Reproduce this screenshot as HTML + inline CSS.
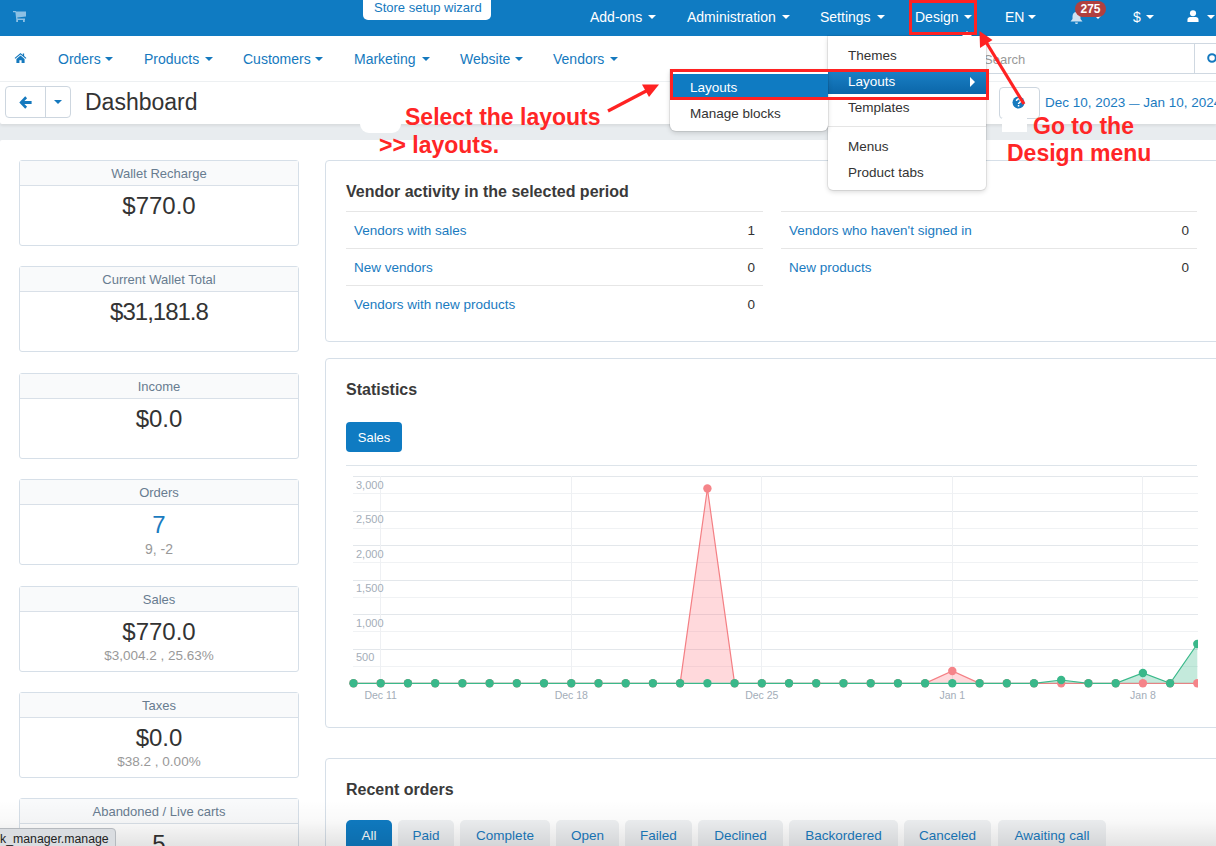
<!DOCTYPE html>
<html><head><meta charset="utf-8">
<style>
*{box-sizing:border-box;margin:0;padding:0}
html,body{width:1216px;height:846px;overflow:hidden}
body{position:relative;font-family:"Liberation Sans",sans-serif;background:#e8ecef;color:#333}
.abs{position:absolute}
.t{position:absolute;white-space:nowrap;line-height:1}
.caret{position:absolute;width:0;height:0;border-left:4px solid transparent;border-right:4px solid transparent;border-top:4px solid currentColor}
/* top bar */
#top{position:absolute;left:0;top:0;width:1216px;height:36px;background:#0f7bc2}
#top .t{color:#fff;font-size:14px;top:10px}
#top .caret{color:#fff;top:15px}
#wiz{position:absolute;left:363px;top:-4px;width:128px;height:24px;background:#fff;border-radius:5px;color:#1579be;font-size:13px;line-height:1}
/* nav 2 */
#nav{position:absolute;left:0;top:36px;width:1216px;height:46px;background:#fff;border-bottom:1px solid #edf0f2}
#nav .t{color:#1579be;font-size:14px;top:16px}
#nav .caret{color:#1579be;top:21px}
/* toolbar */
#tb{position:absolute;left:0;top:82px;width:1216px;height:42px;background:#fff;border-radius:0 0 0 2px;box-shadow:0 2px 3px rgba(0,0,0,.07)}
#main{position:absolute;left:0;top:140px;width:1216px;height:706px;background:#fff;border-radius:2px 0 0 0}
.card{position:absolute;left:19px;width:280px;height:86px;border:1px solid #d6dfe8;border-radius:3px;background:#fff}
.card .hd{height:25px;background:#f9fafb;border-bottom:1px solid #d9e0e8;color:#687c90;font-size:13px;text-align:center;line-height:25px}
.card .v{position:absolute;left:0;width:100%;text-align:center;font-size:24px;color:#333;line-height:1}
.card .s{position:absolute;left:0;width:100%;text-align:center;font-size:13.5px;color:#999;line-height:1}
.pan{position:absolute;left:325px;width:900px;border:1px solid #d6dfe8;border-radius:4px;background:#fff}
.h3{position:absolute;font-weight:bold;font-size:16px;color:#3a3a3a;white-space:nowrap;line-height:1}
.row{position:absolute;height:37px;border-top:1px solid #e6e6e6}
.row .l{position:absolute;left:8px;top:12px;color:#1a7bbf;font-size:13.5px;white-space:nowrap;line-height:1}
.row .n{position:absolute;right:8px;top:12px;color:#333;font-size:13.5px;line-height:1}
.tab{position:absolute;top:820px;height:32px;border-radius:5px;background:#eef0f2;color:#1a7bbf;font-size:13.5px;text-align:center;line-height:32px}
.dd{position:absolute;background:#fff;border-radius:0 0 5px 5px;box-shadow:0 0 0 1px rgba(0,0,0,.07),0 2px 5px rgba(0,0,0,.15)}
.dd .t{color:#333;font-size:13.5px}
.red{color:#ff2626;font-weight:bold;font-size:23px;position:absolute;white-space:nowrap;line-height:1}
</style></head><body>

<div id="top">
  <svg class="abs" style="left:13px;top:11px" width="14" height="12" viewBox="0 0 14 12"><path d="M0 0H2.8L3.2 0.6H13V5.6L4.3 6.6L4.5 7.5H12V9H3.3L2.4 1.2H0z" fill="#8cc0e4"/><rect x="3.2" y="9" width="1.8" height="2" fill="#8cc0e4"/><rect x="10" y="9" width="1.8" height="2" fill="#8cc0e4"/></svg>
  <div id="wiz"><span style="position:absolute;white-space:nowrap;left:11px;top:5px;color:#1579be">Store setup wizard</span></div>
  <span class="t" style="left:590px">Add-ons</span><span class="caret" style="left:648px"></span>
  <span class="t" style="left:687px">Administration</span><span class="caret" style="left:782px"></span>
  <span class="t" style="left:820px">Settings</span><span class="caret" style="left:877px"></span>
  <span class="t" style="left:915px">Design</span><span class="caret" style="left:964px"></span>
  <span class="t" style="left:1005px">EN</span><span class="caret" style="left:1028px"></span>
  <svg class="abs" style="left:1070px;top:12px" width="13" height="12" viewBox="0 0 13 12"><path d="M6.5 0C4 0 2.5 2 2.5 4.5V7L0.5 9.5h12L10.5 7V4.5C10.5 2 9 0 6.5 0z M5 10.5h3a1.5 1.5 0 0 1-3 0z" fill="#cfe3f2"/></svg>
  <span class="caret" style="left:1094px"></span>
  <div class="abs" style="left:1075px;top:1px;width:31px;height:16px;border-radius:8px;background:#b0403f;color:#fff;font-size:12px;font-weight:bold;text-align:center;line-height:16px">275</div>
  <span class="t" style="left:1133px">$</span><span class="caret" style="left:1146px"></span>
  <svg class="abs" style="left:1187px;top:10px" width="12" height="12" viewBox="0 0 13 13"><circle cx="6.5" cy="3.5" r="3.3" fill="#fff"/><path d="M0.5 13V10.5C0.5 8.5 2 7.5 3.5 7.5h6c1.5 0 3 1 3 3V13z" fill="#fff"/></svg>
  <span class="caret" style="left:1207px"></span>
</div>

<div id="nav">
  <svg class="abs" style="left:14px;top:17px" width="13" height="10" viewBox="0 0 13 11"><path d="M6.5 0L0 5.5l0.8 0.9L6.5 1.6l5.7 4.8 0.8-0.9L10.5 3.4V0.6H9V2.1z M2 6.5V11h3.3V8h2.4v3H11V6.5L6.5 2.8z" fill="#1579be"/></svg>
  <span class="t" style="left:58px">Orders</span><span class="caret" style="left:105px"></span>
  <span class="t" style="left:144px">Products</span><span class="caret" style="left:205px"></span>
  <span class="t" style="left:243px">Customers</span><span class="caret" style="left:315px"></span>
  <span class="t" style="left:354px">Marketing</span><span class="caret" style="left:422px"></span>
  <span class="t" style="left:460px">Website</span><span class="caret" style="left:515px"></span>
  <span class="t" style="left:553px">Vendors</span><span class="caret" style="left:610px"></span>
  <div class="abs" style="left:960px;top:7px;width:300px;height:31px;border:1px solid #cfd8e1;border-radius:3px;background:#fff"></div>
  <div class="abs" style="left:1194px;top:8px;width:1px;height:29px;background:#cfd8e1"></div>
  <span class="t" style="left:984px;top:17px;color:#999;font-size:13px">Search</span>
  <svg class="abs" style="left:1207px;top:17px" width="12" height="12" viewBox="0 0 12 12"><circle cx="5" cy="5" r="3.8" fill="none" stroke="#1579be" stroke-width="2"/></svg>
</div>

<div id="tb">
  <div class="abs" style="left:5px;top:4px;width:66px;height:32px;border:1px solid #cdd6df;border-radius:4px"></div>
  <div class="abs" style="left:45px;top:5px;width:1px;height:30px;background:#cdd6df"></div>
  <svg class="abs" style="left:19px;top:14px" width="13" height="13" viewBox="0 0 13 13"><path d="M6.2 0.3L0.3 6.5L6.2 12.7l1.9-1.9L5.4 8H12.6V5H5.4L8.1 2.2z" fill="#1579be"/></svg>
  <span class="caret" style="left:54px;top:18px;color:#1579be"></span>
  <span class="t" style="left:85px;top:9px;font-size:23px;color:#333">Dashboard</span>
  <div class="abs" style="left:999px;top:5px;width:41px;height:32px;border:1px solid #cdd6df;border-radius:4px"></div>
  <svg class="abs" style="left:1012px;top:14px" width="13" height="13" viewBox="0 0 13 13"><circle cx="6.5" cy="6.5" r="6" fill="#1579be"/><path d="M4.5 5a2 2 0 1 1 3 1.6c-0.7 0.4-1 0.7-1 1.4" stroke="#fff" stroke-width="1.5" fill="none"/><rect x="5.8" y="9" width="1.5" height="1.5" fill="#fff"/></svg>
  <span class="t" style="left:1045px;top:14px;font-size:13.5px;color:#1a7bbf">Dec 10, 2023 <span style="font-size:10.5px">—</span> Jan 10, 2024</span>
</div>

<div id="main"></div>

<!-- left cards -->
<div class="card" style="top:160px"><div class="hd">Wallet Recharge</div><div class="v" style="top:33px">$770.0</div></div>
<div class="card" style="top:266px"><div class="hd">Current Wallet Total</div><div class="v" style="top:33px;letter-spacing:-1px">$31,181.8</div></div>
<div class="card" style="top:373px"><div class="hd">Income</div><div class="v" style="top:33px">$0.0</div></div>
<div class="card" style="top:479px"><div class="hd">Orders</div><div class="v" style="top:33px;color:#1a7bbf">7</div><div class="s" style="top:62px;font-size:14px">9, -2</div></div>
<div class="card" style="top:586px"><div class="hd">Sales</div><div class="v" style="top:33px">$770.0</div><div class="s" style="top:62px">$3,004.2 , 25.63%</div></div>
<div class="card" style="top:692px"><div class="hd">Taxes</div><div class="v" style="top:33px">$0.0</div><div class="s" style="top:62px">$38.2 , 0.00%</div></div>
<div class="card" style="top:798px"><div class="hd">Abandoned / Live carts</div><div class="v" style="top:33px">5</div></div>

<!-- vendor activity -->
<div class="pan" style="top:160px;height:182px"></div>
<div class="h3" style="left:346px;top:184px">Vendor activity in the selected period</div>
<div class="row" style="left:346px;top:211px;width:417px"><span class="l">Vendors with sales</span><span class="n">1</span></div>
<div class="row" style="left:346px;top:248px;width:417px"><span class="l">New vendors</span><span class="n">0</span></div>
<div class="row" style="left:346px;top:285px;width:417px"><span class="l">Vendors with new products</span><span class="n">0</span></div>
<div class="row" style="left:781px;top:211px;width:416px"><span class="l">Vendors who haven't signed in</span><span class="n">0</span></div>
<div class="row" style="left:781px;top:248px;width:416px"><span class="l">New products</span><span class="n">0</span></div>

<!-- statistics -->
<div class="pan" style="top:358px;height:370px"></div>
<div class="h3" style="left:346px;top:382px">Statistics</div>
<div class="abs" style="left:346px;top:422px;width:56px;height:30px;border-radius:4px;background:#0f7bc2;color:#fff;font-size:13px;text-align:center;line-height:32px">Sales</div>
<div class="abs" style="left:346px;top:465px;width:851px;height:1px;background:#dde4ea"></div>
<svg id="chart" class="abs" style="left:340px;top:470px" width="858" height="240"><line x1="13.0" y1="6.5" x2="858.0" y2="6.5" stroke="#e3e7eb" stroke-width="1"/><line x1="13.0" y1="41.5" x2="858.0" y2="41.5" stroke="#e3e7eb" stroke-width="1"/><line x1="13.0" y1="75.5" x2="858.0" y2="75.5" stroke="#e3e7eb" stroke-width="1"/><line x1="13.0" y1="110.5" x2="858.0" y2="110.5" stroke="#e3e7eb" stroke-width="1"/><line x1="13.0" y1="144.5" x2="858.0" y2="144.5" stroke="#e3e7eb" stroke-width="1"/><line x1="13.0" y1="179.5" x2="858.0" y2="179.5" stroke="#e3e7eb" stroke-width="1"/><line x1="13.0" y1="23.5" x2="858.0" y2="23.5" stroke="#f0f2f4" stroke-width="1"/><line x1="13.0" y1="58.5" x2="858.0" y2="58.5" stroke="#f0f2f4" stroke-width="1"/><line x1="13.0" y1="92.5" x2="858.0" y2="92.5" stroke="#f0f2f4" stroke-width="1"/><line x1="13.0" y1="127.5" x2="858.0" y2="127.5" stroke="#f0f2f4" stroke-width="1"/><line x1="13.0" y1="161.5" x2="858.0" y2="161.5" stroke="#f0f2f4" stroke-width="1"/><line x1="13.0" y1="196.5" x2="858.0" y2="196.5" stroke="#f0f2f4" stroke-width="1"/><line x1="40.5" y1="6.0" x2="40.5" y2="213.0" stroke="#eef0f3" stroke-width="1"/><line x1="231.5" y1="6.0" x2="231.5" y2="213.0" stroke="#eef0f3" stroke-width="1"/><line x1="421.5" y1="6.0" x2="421.5" y2="213.0" stroke="#eef0f3" stroke-width="1"/><line x1="612.5" y1="6.0" x2="612.5" y2="213.0" stroke="#eef0f3" stroke-width="1"/><line x1="802.5" y1="6.0" x2="802.5" y2="213.0" stroke="#eef0f3" stroke-width="1"/><text x="16" y="19" font-size="11" fill="#a3adb8" font-family="Liberation Sans">3,000</text><text x="16" y="53" font-size="11" fill="#a3adb8" font-family="Liberation Sans">2,500</text><text x="16" y="88" font-size="11" fill="#a3adb8" font-family="Liberation Sans">2,000</text><text x="16" y="122" font-size="11" fill="#a3adb8" font-family="Liberation Sans">1,500</text><text x="16" y="157" font-size="11" fill="#a3adb8" font-family="Liberation Sans">1,000</text><text x="16" y="191" font-size="11" fill="#a3adb8" font-family="Liberation Sans">500</text><text x="40.7" y="229" font-size="10.5" fill="#a3adb8" text-anchor="middle" font-family="Liberation Sans">Dec 11</text><text x="231.3" y="229" font-size="10.5" fill="#a3adb8" text-anchor="middle" font-family="Liberation Sans">Dec 18</text><text x="421.8" y="229" font-size="10.5" fill="#a3adb8" text-anchor="middle" font-family="Liberation Sans">Dec 25</text><text x="612.3" y="229" font-size="10.5" fill="#a3adb8" text-anchor="middle" font-family="Liberation Sans">Jan 1</text><text x="802.9" y="229" font-size="10.5" fill="#a3adb8" text-anchor="middle" font-family="Liberation Sans">Jan 8</text><path d="M13.5 213.3 L13.5 213.3 L40.7 213.3 L67.9 213.3 L95.2 213.3 L122.4 213.3 L149.6 213.3 L176.8 213.3 L204.0 213.3 L231.3 213.3 L258.5 213.3 L285.7 213.3 L312.9 213.3 L340.1 213.3 L367.4 18.5 L394.6 213.3 L421.8 213.3 L449.0 213.3 L476.2 213.3 L503.5 213.3 L530.7 213.3 L557.9 213.3 L585.1 213.3 L612.3 201.0 L639.6 213.3 L666.8 213.3 L694.0 213.3 L721.2 213.3 L748.4 213.3 L775.7 213.3 L802.9 213.3 L830.1 213.3 L857.3 213.3 L857.3 213.3z" fill="rgba(255,120,130,0.28)"/><path d="M13.5 213.3 L40.7 213.3 L67.9 213.3 L95.2 213.3 L122.4 213.3 L149.6 213.3 L176.8 213.3 L204.0 213.3 L231.3 213.3 L258.5 213.3 L285.7 213.3 L312.9 213.3 L340.1 213.3 L367.4 18.5 L394.6 213.3 L421.8 213.3 L449.0 213.3 L476.2 213.3 L503.5 213.3 L530.7 213.3 L557.9 213.3 L585.1 213.3 L612.3 201.0 L639.6 213.3 L666.8 213.3 L694.0 213.3 L721.2 213.3 L748.4 213.3 L775.7 213.3 L802.9 213.3 L830.1 213.3 L857.3 213.3" fill="none" stroke="#f47f84" stroke-width="1.2"/><path d="M13.5 213.3 L13.5 213.3 L40.7 213.3 L67.9 213.3 L95.2 213.3 L122.4 213.3 L149.6 213.3 L176.8 213.3 L204.0 213.3 L231.3 213.3 L258.5 213.3 L285.7 213.3 L312.9 213.3 L340.1 213.3 L367.4 213.3 L394.6 213.3 L421.8 213.3 L449.0 213.3 L476.2 213.3 L503.5 213.3 L530.7 213.3 L557.9 213.3 L585.1 213.3 L612.3 213.3 L639.6 213.3 L666.8 213.3 L694.0 213.3 L721.2 210.0 L748.4 213.3 L775.7 213.3 L802.9 203.0 L830.1 213.3 L857.3 174.0 L857.3 213.3z" fill="rgba(58,185,138,0.3)"/><path d="M13.5 213.3 L40.7 213.3 L67.9 213.3 L95.2 213.3 L122.4 213.3 L149.6 213.3 L176.8 213.3 L204.0 213.3 L231.3 213.3 L258.5 213.3 L285.7 213.3 L312.9 213.3 L340.1 213.3 L367.4 213.3 L394.6 213.3 L421.8 213.3 L449.0 213.3 L476.2 213.3 L503.5 213.3 L530.7 213.3 L557.9 213.3 L585.1 213.3 L612.3 213.3 L639.6 213.3 L666.8 213.3 L694.0 213.3 L721.2 210.0 L748.4 213.3 L775.7 213.3 L802.9 203.0 L830.1 213.3 L857.3 174.0" fill="none" stroke="#3ab98a" stroke-width="1.2"/><circle cx="13.5" cy="213.3" r="4.2" fill="#f58489"/><circle cx="40.7" cy="213.3" r="4.2" fill="#f58489"/><circle cx="67.9" cy="213.3" r="4.2" fill="#f58489"/><circle cx="95.2" cy="213.3" r="4.2" fill="#f58489"/><circle cx="122.4" cy="213.3" r="4.2" fill="#f58489"/><circle cx="149.6" cy="213.3" r="4.2" fill="#f58489"/><circle cx="176.8" cy="213.3" r="4.2" fill="#f58489"/><circle cx="204.0" cy="213.3" r="4.2" fill="#f58489"/><circle cx="231.3" cy="213.3" r="4.2" fill="#f58489"/><circle cx="258.5" cy="213.3" r="4.2" fill="#f58489"/><circle cx="285.7" cy="213.3" r="4.2" fill="#f58489"/><circle cx="312.9" cy="213.3" r="4.2" fill="#f58489"/><circle cx="340.1" cy="213.3" r="4.2" fill="#f58489"/><circle cx="367.4" cy="18.5" r="4.2" fill="#f58489"/><circle cx="394.6" cy="213.3" r="4.2" fill="#f58489"/><circle cx="421.8" cy="213.3" r="4.2" fill="#f58489"/><circle cx="449.0" cy="213.3" r="4.2" fill="#f58489"/><circle cx="476.2" cy="213.3" r="4.2" fill="#f58489"/><circle cx="503.5" cy="213.3" r="4.2" fill="#f58489"/><circle cx="530.7" cy="213.3" r="4.2" fill="#f58489"/><circle cx="557.9" cy="213.3" r="4.2" fill="#f58489"/><circle cx="585.1" cy="213.3" r="4.2" fill="#f58489"/><circle cx="612.3" cy="201.0" r="4.2" fill="#f58489"/><circle cx="639.6" cy="213.3" r="4.2" fill="#f58489"/><circle cx="666.8" cy="213.3" r="4.2" fill="#f58489"/><circle cx="694.0" cy="213.3" r="4.2" fill="#f58489"/><circle cx="721.2" cy="213.3" r="4.2" fill="#f58489"/><circle cx="748.4" cy="213.3" r="4.2" fill="#f58489"/><circle cx="775.7" cy="213.3" r="4.2" fill="#f58489"/><circle cx="802.9" cy="213.3" r="4.2" fill="#f58489"/><circle cx="830.1" cy="213.3" r="4.2" fill="#f58489"/><circle cx="857.3" cy="213.3" r="4.2" fill="#f58489"/><circle cx="13.5" cy="213.3" r="4.2" fill="#39b88a"/><circle cx="40.7" cy="213.3" r="4.2" fill="#39b88a"/><circle cx="67.9" cy="213.3" r="4.2" fill="#39b88a"/><circle cx="95.2" cy="213.3" r="4.2" fill="#39b88a"/><circle cx="122.4" cy="213.3" r="4.2" fill="#39b88a"/><circle cx="149.6" cy="213.3" r="4.2" fill="#39b88a"/><circle cx="176.8" cy="213.3" r="4.2" fill="#39b88a"/><circle cx="204.0" cy="213.3" r="4.2" fill="#39b88a"/><circle cx="231.3" cy="213.3" r="4.2" fill="#39b88a"/><circle cx="258.5" cy="213.3" r="4.2" fill="#39b88a"/><circle cx="285.7" cy="213.3" r="4.2" fill="#39b88a"/><circle cx="312.9" cy="213.3" r="4.2" fill="#39b88a"/><circle cx="340.1" cy="213.3" r="4.2" fill="#39b88a"/><circle cx="367.4" cy="213.3" r="4.2" fill="#39b88a"/><circle cx="394.6" cy="213.3" r="4.2" fill="#39b88a"/><circle cx="421.8" cy="213.3" r="4.2" fill="#39b88a"/><circle cx="449.0" cy="213.3" r="4.2" fill="#39b88a"/><circle cx="476.2" cy="213.3" r="4.2" fill="#39b88a"/><circle cx="503.5" cy="213.3" r="4.2" fill="#39b88a"/><circle cx="530.7" cy="213.3" r="4.2" fill="#39b88a"/><circle cx="557.9" cy="213.3" r="4.2" fill="#39b88a"/><circle cx="585.1" cy="213.3" r="4.2" fill="#39b88a"/><circle cx="612.3" cy="213.3" r="4.2" fill="#39b88a"/><circle cx="639.6" cy="213.3" r="4.2" fill="#39b88a"/><circle cx="666.8" cy="213.3" r="4.2" fill="#39b88a"/><circle cx="694.0" cy="213.3" r="4.2" fill="#39b88a"/><circle cx="721.2" cy="210.0" r="4.2" fill="#39b88a"/><circle cx="748.4" cy="213.3" r="4.2" fill="#39b88a"/><circle cx="775.7" cy="213.3" r="4.2" fill="#39b88a"/><circle cx="802.9" cy="203.0" r="4.2" fill="#39b88a"/><circle cx="830.1" cy="213.3" r="4.2" fill="#39b88a"/><circle cx="857.3" cy="174.0" r="4.2" fill="#39b88a"/></svg>

<!-- recent orders -->
<div class="pan" style="top:758px;height:120px"></div>
<div class="h3" style="left:346px;top:782px">Recent orders</div>
<div class="tab" style="left:346px;width:46px;background:#0f7bc2;color:#fff">All</div>
<div class="tab" style="left:398px;width:56px">Paid</div>
<div class="tab" style="left:460px;width:90px">Complete</div>
<div class="tab" style="left:556px;width:63px">Open</div>
<div class="tab" style="left:625px;width:67px">Failed</div>
<div class="tab" style="left:698px;width:85px">Declined</div>
<div class="tab" style="left:789px;width:109px">Backordered</div>
<div class="tab" style="left:904px;width:87px">Canceled</div>
<div class="tab" style="left:998px;width:108px">Awaiting call</div>

<!-- bottom shade -->
<div class="abs" style="left:0;top:800px;width:1216px;height:46px;background:linear-gradient(rgba(0,0,0,0) 0%,rgba(0,0,0,.025) 45%,rgba(0,0,0,.11) 100%)"></div>

<!-- tooltip -->
<div class="abs" style="left:-4px;top:828px;width:120px;height:22px;background:#dadde1;border:1px solid #b5b9be;border-radius:0 4px 0 0"></div>
<span class="t" style="left:0;top:833px;font-size:12.3px;color:#222">k_manager.manage</span>

<!-- design dropdown -->
<div class="dd" style="left:828px;top:36px;width:158px;height:154px">
  <span class="t" style="left:20px;top:13px">Themes</span>
  <div class="abs" style="left:0;top:35px;width:158px;height:23px;background:linear-gradient(#1a80c6,#0b66a8)"></div>
  <span class="t" style="left:20px;top:39px;color:#fff">Layouts</span>
  <svg class="abs" style="left:142px;top:41px" width="6" height="10" viewBox="0 0 6 10"><path d="M0 0L5 5L0 10z" fill="#fff"/></svg>
  <span class="t" style="left:20px;top:65px">Templates</span>
  <div class="abs" style="left:0;top:90px;width:158px;height:1px;background:#e5e5e5"></div>
  <span class="t" style="left:20px;top:104px">Menus</span>
  <span class="t" style="left:20px;top:130px">Product tabs</span>
</div>
<div class="dd" style="left:670px;top:70px;width:158px;height:61px;border-radius:0 0 6px 6px">
  <div class="abs" style="left:0;top:4px;width:158px;height:23px;background:#0f7bc2"></div>
  <span class="t" style="left:20px;top:11px;color:#fff">Layouts</span>
  <span class="t" style="left:20px;top:37px">Manage blocks</span>
</div>

<div class="abs" style="left:962px;top:31px;width:0;height:0;border-left:5px solid transparent;border-right:5px solid transparent;border-bottom:5px solid #fff"></div>
<!-- red highlight boxes -->
<div class="abs" style="left:909px;top:0;width:68px;height:35px;border:3px solid #f22"></div>
<div class="abs" style="left:670px;top:69px;width:319px;height:31px;border:3px solid #f22"></div>

<!-- arrows -->
<svg class="abs" style="left:0;top:0" width="1216" height="846">
  <line x1="1024" y1="104" x2="986" y2="42" stroke="#f22" stroke-width="3.2"/>
  <path d="M979.5 31L980 48L992.5 40z" fill="#f22"/>
  <line x1="608" y1="111" x2="650" y2="89" stroke="#f22" stroke-width="3.2"/>
  <path d="M659 84.4L642 84.4L649 97z" fill="#f22"/>
</svg>

<!-- annotation texts -->
<div class="red" style="left:405px;top:106px">Select the layouts</div>
<div class="red" style="left:379px;top:134px">&gt;&gt; layouts.</div>
<div class="abs" style="left:360px;top:104px;width:41px;height:29px;background:#fff;border-radius:0 0 9px 9px"></div>
<div class="red" style="left:1033px;top:115px">Go to the</div>
<div class="red" style="left:1007px;top:142px">Design menu</div>
<div class="abs" style="left:1002px;top:118px;width:25px;height:14px;background:#fff"></div>


</body></html>
